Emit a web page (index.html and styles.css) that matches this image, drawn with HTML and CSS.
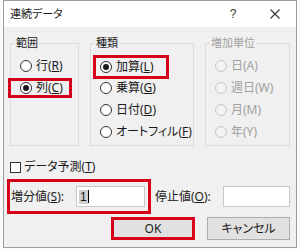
FILE: index.html
```html
<!DOCTYPE html>
<html lang="ja">
<head>
    <meta charset="UTF-8">
    <meta name="viewport" content="width=device-width, initial-scale=1.0">
    <title>連続データ</title>
    <link rel="stylesheet" href="styles.css">
</head>
<body>
    <div class="dialog">
        <div class="titlebar">
            <span class="title">連続データ</span>
            <span class="tb-btn help">?</span>
            <span class="tb-btn close">
                <svg width="10" height="10" viewBox="0 0 10 10"><path d="M0.5 0.5 L9.5 9.5 M9.5 0.5 L0.5 9.5" stroke="#333" stroke-width="1.1" fill="none"/></svg>
            </span>
        </div>

        <div class="content">
            <div class="groups">
                <fieldset class="group g-range">
                    <legend>範囲</legend>
                    <div class="radio"><span class="dot"></span><span>行(<u>R</u>)</span></div>
                    <div class="radio mark mark-col"><span class="dot on"></span><span>列(<u>C</u>)</span></div>
                </fieldset>

                <fieldset class="group g-type">
                    <legend>種類</legend>
                    <div class="radio mark mark-add"><span class="dot on"></span><span>加算(<u>L</u>)</span></div>
                    <div class="radio"><span class="dot"></span><span>乗算(<u>G</u>)</span></div>
                    <div class="radio"><span class="dot"></span><span>日付(<u>D</u>)</span></div>
                    <div class="radio"><span class="dot"></span><span>オートフィル(<u>F</u>)</span></div>
                </fieldset>

                <fieldset class="group g-unit disabled">
                    <legend>増加単位</legend>
                    <div class="radio"><span class="dot"></span><span>日(A)</span></div>
                    <div class="radio"><span class="dot"></span><span>週日(W)</span></div>
                    <div class="radio"><span class="dot"></span><span>月(M)</span></div>
                    <div class="radio"><span class="dot"></span><span>年(Y)</span></div>
                </fieldset>
            </div>

            <div class="check-row">
                <span class="checkbox"></span><span>データ予測(<u>T</u>)</span>
            </div>

            <div class="value-row">
                <div class="step mark">
                    <span class="field-label">増分値(<u>S</u>):</span>
                    <span class="input step-input"><span class="sel">1</span><span class="caret"></span></span>
                </div>
                <span class="field-label stop-label">停止値(<u>O</u>):</span>
                <span class="input stop-input"></span>
            </div>

            <div class="buttons">
                <span class="btn btn-ok">OK</span>
                <span class="btn btn-cancel">キャンセル</span>
            </div>
        </div>
    </div>
</body>
</html>
```

FILE: styles.css
```css
/* base */
body {
    margin: 0;
    background-color: #fbfbfb;
    font-family: "Noto Sans", "Noto Sans CJK JP", sans-serif;
    font-size: 11px;
    line-height: 14px;
    color: #1a1a1a;
}

u {
    text-decoration-thickness: 1px;
    text-underline-offset: 1px;
}

/* dialog frame */
.dialog {
    margin-left: 3px;
    width: 294px;
    height: 248px;
    box-sizing: border-box;
    border: 1px solid #9c9c9c;
    background-color: #f0f0f0;
}

.titlebar {
    height: 26px;
    background-color: #fff;
    display: flex;
    align-items: center;
}

.title {
    flex: 1;
    padding-left: 6px;
    font-feature-settings: "palt";
}

.tb-btn {
    width: 42px;
    height: 26px;
    display: flex;
    align-items: center;
    justify-content: center;
    color: #333;
}

.help {
    font-family: "Liberation Sans", sans-serif;
    font-size: 12px;
}

/* contents */
.content {
    padding: 9px 6px 0 6px;
}

.groups {
    display: flex;
    gap: 11px;
}

.group {
    margin: 0;
    padding: 5px 0 2px 4px;
    border: 1px solid #dcdcdc;
    min-inline-size: 0;
    box-sizing: border-box;
}

.group legend {
    padding: 0 1px;
    line-height: 14px;
}

.g-range { width: 69px; }
.g-type { width: 104px; }
.g-unit { width: 85px; }

.radio {
    display: flex;
    align-items: center;
    gap: 4px;
    height: 22px;
    margin-left: 5px;
    white-space: nowrap;
    font-size: 12px;
    font-feature-settings: "palt";
}

.dot {
    width: 12px;
    height: 12px;
    box-sizing: border-box;
    border: 1px solid #333;
    border-radius: 50%;
    background-color: #fff;
    display: flex;
    align-items: center;
    justify-content: center;
    flex-shrink: 0;
}

.dot.on::after {
    content: "";
    width: 6px;
    height: 6px;
    border-radius: 50%;
    background-color: #1a1a1a;
}

.disabled {
    color: #a0a0a0;
}

.disabled .dot {
    border-color: #c4c4c4;
    background-color: #f4f4f4;
}

/* red highlight frames */
.mark {
    border: 3px solid #d7001a;
    box-sizing: border-box;
}

.mark-col {
    width: 64px;
    height: 20px;
    margin: 1px 0 1px -7px;
    padding-left: 9px;
}

.mark-add {
    width: 76px;
    height: 24px;
    margin: 0 0 -2px -2px;
    padding-left: 4px;
}

.check-row {
    display: flex;
    align-items: center;
    gap: 3px;
    height: 14px;
    margin-top: 14px;
    font-size: 12px;
    font-feature-settings: "palt";
}

.checkbox {
    width: 11px;
    height: 11px;
    box-sizing: border-box;
    border: 1px solid #333;
    background-color: #fff;
}

.value-row {
    display: flex;
    align-items: center;
    margin-top: 5px;
}

.step {
    width: 144px;
    height: 35px;
    margin-left: -3px;
    padding-left: 1px;
    display: flex;
    align-items: center;
}

.field-label {
    white-space: nowrap;
    font-size: 12px;
}

.input {
    height: 21px;
    box-sizing: border-box;
    border: 1px solid #c8c8c8;
    background-color: #fff;
    display: flex;
    align-items: center;
}

.step-input {
    width: 69px;
    margin-left: auto;
    margin-right: 3px;
    padding-left: 2px;
}

.sel {
    background-color: #cfcfcf;
    font-family: "Liberation Sans", sans-serif;
    font-size: 12px;
    line-height: 14px;
    padding: 0 1px;
}

.caret {
    width: 1px;
    height: 13px;
    background-color: #000;
}

.stop-label {
    margin-left: 4px;
}

.stop-input {
    width: 67px;
    margin-left: auto;
}

/* buttons */
.buttons {
    display: flex;
    justify-content: flex-end;
    gap: 12px;
    margin-top: 3px;
}

.btn {
    height: 23px;
    box-sizing: border-box;
    background-color: #e1e1e1;
    border: 1px solid #adadad;
    display: flex;
    align-items: center;
    justify-content: center;
    font-size: 12px;
}

.btn-ok {
    width: 84px;
    border: 3px solid #d7001a;
}

.btn-cancel {
    width: 83px;
    font-feature-settings: "palt";
}
```
